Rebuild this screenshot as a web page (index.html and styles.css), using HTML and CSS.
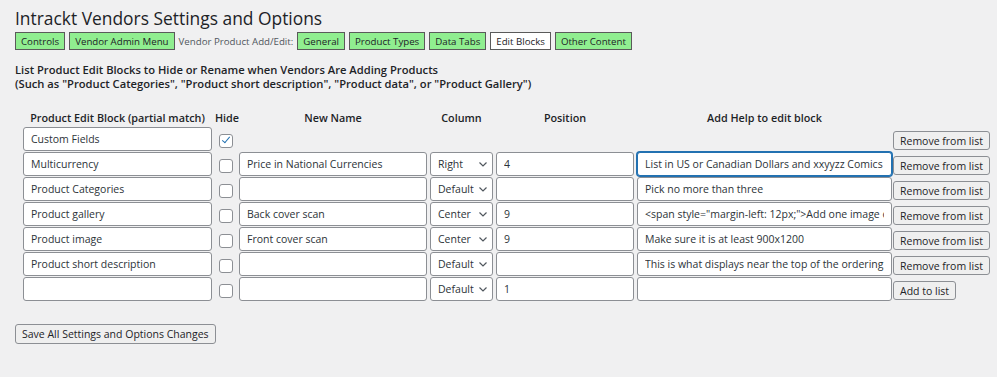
FILE: index.html
```html
<!DOCTYPE html>
<html lang="en">
<head>
  <meta charset="UTF-8">
  <title>Intrackt Vendors Settings and Options</title>
  <link rel="stylesheet" href="styles.css">
</head>
<body>

<div class="wrap">
  <h1 class="title">Intrackt Vendors Settings and Options</h1>

  <div class="tabs">
    <button class="tab">Controls</button>
    <button class="tab">Vendor Admin Menu</button>
    <span class="tab-label">Vendor Product Add/Edit:</span>
    <button class="tab">General</button>
    <button class="tab">Product Types</button>
    <button class="tab">Data Tabs</button>
    <button class="tab current">Edit Blocks</button>
    <button class="tab">Other Content</button>
  </div>

  <p class="intro">
    List Product Edit Blocks to Hide or Rename when Vendors Are Adding Products<br>
    (Such as "Product Categories", "Product short description", "Product data", or "Product Gallery")
  </p>

  <table class="blocks">
    <thead>
      <tr>
        <th class="c-block">Product Edit Block (partial match)</th>
        <th class="c-hide">Hide</th>
        <th class="c-name">New Name</th>
        <th class="c-col">Column</th>
        <th class="c-pos">Position</th>
        <th class="c-help">Add Help to edit block</th>
        <th class="c-btn"></th>
      </tr>
    </thead>
    <tbody>
      <tr>
        <td><input class="field" type="text" value="Custom Fields"></td>
        <td class="hide"><input class="check" type="checkbox" checked></td>
        <td></td>
        <td></td>
        <td></td>
        <td></td>
        <td><button class="btn">Remove from list</button></td>
      </tr>
      <tr>
        <td><input class="field" type="text" value="Multicurrency"></td>
        <td class="hide"><input class="check" type="checkbox"></td>
        <td><input class="field" type="text" value="Price in National Currencies"></td>
        <td>
          <span class="select-wrap">
            <select class="select"><option>Right</option></select>
            <svg class="chev" width="8" height="5" viewBox="0 0 8 5"><path d="M0.5 0.5 L4 4 L7.5 0.5" fill="none" stroke="#50575e" stroke-width="1.2"/></svg>
          </span>
        </td>
        <td><input class="field" type="text" value="4"></td>
        <td><input class="field focus" type="text" value="List in US or Canadian Dollars and xxyyzz Comics"></td>
        <td><button class="btn">Remove from list</button></td>
      </tr>
      <tr>
        <td><input class="field" type="text" value="Product Categories"></td>
        <td class="hide"><input class="check" type="checkbox"></td>
        <td><input class="field" type="text" value=""></td>
        <td>
          <span class="select-wrap">
            <select class="select"><option>Default</option></select>
            <svg class="chev" width="8" height="5" viewBox="0 0 8 5"><path d="M0.5 0.5 L4 4 L7.5 0.5" fill="none" stroke="#50575e" stroke-width="1.2"/></svg>
          </span>
        </td>
        <td><input class="field" type="text" value=""></td>
        <td><input class="field" type="text" value="Pick no more than three"></td>
        <td><button class="btn">Remove from list</button></td>
      </tr>
      <tr>
        <td><input class="field" type="text" value="Product gallery"></td>
        <td class="hide"><input class="check" type="checkbox"></td>
        <td><input class="field" type="text" value="Back cover scan"></td>
        <td>
          <span class="select-wrap">
            <select class="select"><option>Center</option></select>
            <svg class="chev" width="8" height="5" viewBox="0 0 8 5"><path d="M0.5 0.5 L4 4 L7.5 0.5" fill="none" stroke="#50575e" stroke-width="1.2"/></svg>
          </span>
        </td>
        <td><input class="field" type="text" value="9"></td>
        <td><input class="field" type="text" value='<span style="margin-left: 12px;">Add one image of the back cover</span>'></td>
        <td><button class="btn">Remove from list</button></td>
      </tr>
      <tr>
        <td><input class="field" type="text" value="Product image"></td>
        <td class="hide"><input class="check" type="checkbox"></td>
        <td><input class="field" type="text" value="Front cover scan"></td>
        <td>
          <span class="select-wrap">
            <select class="select"><option>Center</option></select>
            <svg class="chev" width="8" height="5" viewBox="0 0 8 5"><path d="M0.5 0.5 L4 4 L7.5 0.5" fill="none" stroke="#50575e" stroke-width="1.2"/></svg>
          </span>
        </td>
        <td><input class="field" type="text" value="9"></td>
        <td><input class="field" type="text" value="Make sure it is at least 900x1200"></td>
        <td><button class="btn">Remove from list</button></td>
      </tr>
      <tr>
        <td><input class="field" type="text" value="Product short description"></td>
        <td class="hide"><input class="check" type="checkbox"></td>
        <td><input class="field" type="text" value=""></td>
        <td>
          <span class="select-wrap">
            <select class="select"><option>Default</option></select>
            <svg class="chev" width="8" height="5" viewBox="0 0 8 5"><path d="M0.5 0.5 L4 4 L7.5 0.5" fill="none" stroke="#50575e" stroke-width="1.2"/></svg>
          </span>
        </td>
        <td><input class="field" type="text" value=""></td>
        <td><input class="field" type="text" value="This is what displays near the top of the ordering page"></td>
        <td><button class="btn">Remove from list</button></td>
      </tr>
      <tr>
        <td><input class="field" type="text" value=""></td>
        <td class="hide"><input class="check" type="checkbox"></td>
        <td><input class="field" type="text" value=""></td>
        <td>
          <span class="select-wrap">
            <select class="select"><option>Default</option></select>
            <svg class="chev" width="8" height="5" viewBox="0 0 8 5"><path d="M0.5 0.5 L4 4 L7.5 0.5" fill="none" stroke="#50575e" stroke-width="1.2"/></svg>
          </span>
        </td>
        <td><input class="field" type="text" value="1"></td>
        <td><input class="field" type="text" value=""></td>
        <td><button class="btn">Add to list</button></td>
      </tr>
    </tbody>
  </table>

  <button class="btn save">Save All Settings and Options Changes</button>
</div>

</body>
</html>
```

FILE: styles.css
```css
body { font-family: "Open Sans", Arial, sans-serif; background: #f0f0f1; color: #1d2327; margin: 0; padding: 0; }
.wrap { padding: 0 15px; }

.title { font-size: 17.4px; font-weight: 400; line-height: 22px; margin: 0; padding: 7px 0 3px; color: #1d2327; }

.tabs { display: flex; align-items: center; gap: 4px; height: 18px; }
.tab { font-family: inherit; font-size: 9.7px; height: 18px; padding: 0 5px; background: #90ee90; border: 1px solid #5a5a5a; border-radius: 0; color: #1d2327; margin: 0; }
.tab.current { background: #fff; }
.tab-label { font-size: 9.7px; color: #50575e; }

.intro { font-size: 11.2px; font-weight: 600; line-height: 13.5px; margin: 13px 0 0; color: #1d2327; }

.blocks { border-collapse: separate; border-spacing: 3px 1px; table-layout: fixed; width: 975px; margin: 20px 0 0 5px; }
.blocks th { font-size: 10.8px; font-weight: 600; color: #1d2327; padding: 0 0 1px; line-height: 14px; text-align: center; white-space: nowrap; }
.blocks td { padding: 0; height: 24px; vertical-align: middle; }
.c-block { width: 189px; }
.c-hide { width: 21px; }
.c-name { width: 188px; }
.c-col { width: 63px; }
.c-pos { width: 138px; }
.c-help { width: 255px; }
.c-btn { width: 97px; }

.field { box-sizing: border-box; width: 100%; height: 24px; font-family: inherit; font-size: 10.5px; color: #2c3338; background: #fff; border: 1px solid #8c8f94; border-radius: 3px; padding: 0 7px; margin: 0; display: block; }
.field.focus { border-color: #2271b1; box-shadow: 0 0 0 1px #2271b1; outline: none; }

.hide { text-align: center; }
.check { appearance: none; -webkit-appearance: none; box-sizing: border-box; width: 14px; height: 14px; margin: 0 0 0 1px; border: 1px solid #8c8f94; border-radius: 3px; background: #fff; position: relative; vertical-align: middle; }
.check:checked::before { content: ""; position: absolute; left: 3.5px; top: 0.5px; width: 3px; height: 7px; border: solid #2271b1; border-width: 0 1.7px 1.7px 0; transform: rotate(40deg); }

.select-wrap { position: relative; display: block; }
.select { appearance: none; -webkit-appearance: none; box-sizing: border-box; width: 100%; height: 24px; font-family: inherit; font-size: 10.5px; color: #2c3338; background: #fff; border: 1px solid #8c8f94; border-radius: 3px; padding: 0 18px 0 7px; margin: 0; display: block; }
.chev { position: absolute; right: 6px; top: 10px; pointer-events: none; }

.btn { font-family: inherit; font-size: 10.5px; color: #1d2327; background: #efefef; border: 1px solid #8c8f94; border-radius: 3px; height: 19px; padding: 0 6px; margin: 0; white-space: nowrap; }
.blocks .btn { margin-left: -2px; }
.save { margin-top: 22px; height: 20px; padding: 0 6px; }
```
